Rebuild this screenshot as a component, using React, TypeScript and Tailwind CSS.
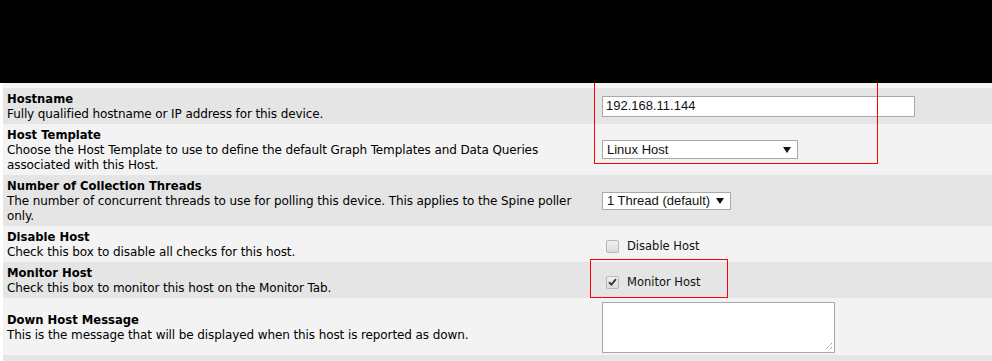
import React from "react";

const Arrow = () => (
  <svg width="8" height="6" viewBox="0 0 8 6" className="shrink-0">
    <path d="M0 0 H8 L4 6 Z" fill="#111" />
  </svg>
);

function Row({
  gray,
  title,
  lines,
  children,
  h,
}: {
  gray: boolean;
  title: string;
  lines: string[];
  children?: React.ReactNode;
  h: string;
}) {
  return (
    <div className={`flex ${h} ${gray ? "bg-[#e5e5e5]" : "bg-[#f3f3f3]"}`}>
      <div className="flex w-[599px] shrink-0 flex-col justify-center pl-[4px] pt-[2px] text-[12px] leading-[15px] tracking-[-0.1px] text-[#000]">
        <div className="text-[11.6px] font-bold tracking-normal">{title}</div>
        {lines.map((l, i) => (
          <div key={i} className="whitespace-nowrap">
            {l}
          </div>
        ))}
      </div>
      <div className="flex items-center">{children}</div>
    </div>
  );
}

function Checkbox({ checked }: { checked?: boolean }) {
  return (
    <div className="ml-[4px] flex h-[13px] w-[13px] items-center justify-center rounded-[2px] border border-[#b8b8b8] bg-gradient-to-b from-[#f0f0f0] to-[#dcdcdc]">
      {checked && (
        <svg width="9" height="8" viewBox="0 0 9 8">
          <path d="M1 4.2 L3.4 6.6 L8 1.2" stroke="#333" strokeWidth="1.8" fill="none" />
        </svg>
      )}
    </div>
  );
}

export default function App() {
  return (
    <div className="relative h-[361px] w-[992px] overflow-hidden bg-white font-['DejaVu_Sans',Verdana,sans-serif]">
      <div className="h-[83px] bg-black" />
      <div className="pl-[3px]">
        <div className="h-[5px] bg-[#f3f3f3]" />
        <Row gray h="h-[36px]" title="Hostname" lines={["Fully qualified hostname or IP address for this device."]}>
          <div className="flex h-[21px] w-[313px] items-center border border-[#a9a9a9] bg-white pl-[3px] font-['Liberation_Sans',Arial,sans-serif] text-[13px] text-[#111]">
            192.168.11.144
          </div>
        </Row>
        <Row
          gray={false}
          h="h-[51px]"
          title="Host Template"
          lines={[
            "Choose the Host Template to use to define the default Graph Templates and Data Queries",
            "associated with this Host.",
          ]}
        >
          <div className="flex h-[19px] w-[196px] items-center justify-between border border-[#a9a9a9] bg-white pl-[4px] pr-[6px] font-['Liberation_Sans',Arial,sans-serif] text-[13px] text-[#111]">
            <span>Linux Host</span>
            <Arrow />
          </div>
        </Row>
        <Row
          gray
          h="h-[51px]"
          title="Number of Collection Threads"
          lines={[
            "The number of concurrent threads to use for polling this device. This applies to the Spine poller",
            "only.",
          ]}
        >
          <div className="flex h-[18px] w-[129px] items-center justify-between border border-[#a9a9a9] bg-white pl-[4px] pr-[6px] font-['Liberation_Sans',Arial,sans-serif] text-[13px] text-[#111]">
            <span>1 Thread (default)</span>
            <Arrow />
          </div>
        </Row>
        <Row gray={false} h="h-[36px]" title="Disable Host" lines={["Check this box to disable all checks for this host."]}>
          <div className="flex items-center pt-[5px]">
            <Checkbox />
            <span className="ml-[8px] pt-[1px] text-[11.5px] text-[#111]">Disable Host</span>
          </div>
        </Row>
        <Row gray h="h-[36px]" title="Monitor Host" lines={["Check this box to monitor this host on the Monitor Tab."]}>
          <div className="flex items-center pt-[4px]">
            <Checkbox checked />
            <span className="ml-[8px] pt-[2px] text-[11.5px] text-[#111]">Monitor Host</span>
          </div>
        </Row>
        <Row
          gray={false}
          h="h-[57px]"
          title="Down Host Message"
          lines={["This is the message that will be displayed when this host is reported as down."]}
        >
          <div className="relative mt-[1px] h-[51px] w-[233px] border border-[#a9a9a9] bg-white">
            <svg width="9" height="9" viewBox="0 0 9 9" className="absolute bottom-[1px] right-[1px]">
              <path d="M8 1 L1 8 M8 5 L5 8" stroke="#777" strokeWidth="1" strokeDasharray="1 1" />
            </svg>
          </div>
        </Row>
        <div className="h-[40px] bg-[#e5e5e5] pl-[4px] pt-[4px] text-[11.6px] font-bold leading-[15px] text-[#000]">
          Thold Up/Down Email Notification
        </div>
      </div>
      <div className="absolute left-[594px] top-[83px] h-[81px] w-[284px] border-x border-b border-[#ff0000]" />
      <div className="absolute left-[590px] top-[259px] h-[39px] w-[138px] border border-[#ff0000]" />
    </div>
  );
}
